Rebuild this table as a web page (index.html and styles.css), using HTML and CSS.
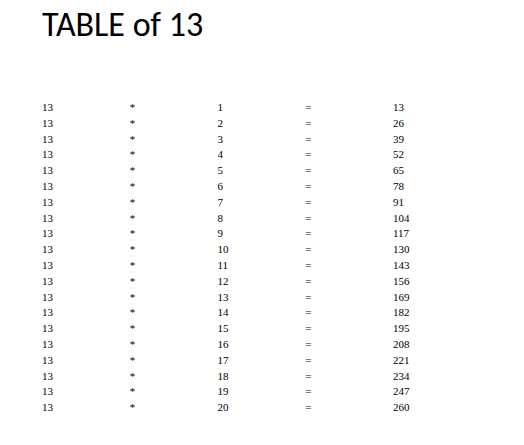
FILE: index.html
```html
<!DOCTYPE html>
<html>
<head>
<meta charset="utf-8">
<link rel="stylesheet" href="styles.css">
</head>
<body>
<h1 class="title">TABLE of 13</h1>
<div class="table">
<div class="row"><span>13</span><span>*</span><span>1</span><span>=</span><span>13</span></div>
<div class="row"><span>13</span><span>*</span><span>2</span><span>=</span><span>26</span></div>
<div class="row"><span>13</span><span>*</span><span>3</span><span>=</span><span>39</span></div>
<div class="row"><span>13</span><span>*</span><span>4</span><span>=</span><span>52</span></div>
<div class="row"><span>13</span><span>*</span><span>5</span><span>=</span><span>65</span></div>
<div class="row"><span>13</span><span>*</span><span>6</span><span>=</span><span>78</span></div>
<div class="row"><span>13</span><span>*</span><span>7</span><span>=</span><span>91</span></div>
<div class="row"><span>13</span><span>*</span><span>8</span><span>=</span><span>104</span></div>
<div class="row"><span>13</span><span>*</span><span>9</span><span>=</span><span>117</span></div>
<div class="row"><span>13</span><span>*</span><span>10</span><span>=</span><span>130</span></div>
<div class="row"><span>13</span><span>*</span><span>11</span><span>=</span><span>143</span></div>
<div class="row"><span>13</span><span>*</span><span>12</span><span>=</span><span>156</span></div>
<div class="row"><span>13</span><span>*</span><span>13</span><span>=</span><span>169</span></div>
<div class="row"><span>13</span><span>*</span><span>14</span><span>=</span><span>182</span></div>
<div class="row"><span>13</span><span>*</span><span>15</span><span>=</span><span>195</span></div>
<div class="row"><span>13</span><span>*</span><span>16</span><span>=</span><span>208</span></div>
<div class="row"><span>13</span><span>*</span><span>17</span><span>=</span><span>221</span></div>
<div class="row"><span>13</span><span>*</span><span>18</span><span>=</span><span>234</span></div>
<div class="row"><span>13</span><span>*</span><span>19</span><span>=</span><span>247</span></div>
<div class="row"><span>13</span><span>*</span><span>20</span><span>=</span><span>260</span></div>
</div>
</body>
</html>
```
FILE: styles.css
```css
html,body{margin:0;padding:0;background:#fff;}
body{width:524px;height:445px;overflow:hidden;}
.title{margin:0;padding:5px 0 0 42px;font-family:Carlito,Lato,sans-serif;font-weight:400;font-size:34px;line-height:40px;color:#000;}
.table{padding:55px 0 0 42px;font-family:"Liberation Serif",serif;font-size:11px;color:#000;}
.row{display:grid;grid-template-columns:repeat(5,87.75px);height:15.8px;line-height:15.8px;}
.row span{white-space:nowrap;}
```
